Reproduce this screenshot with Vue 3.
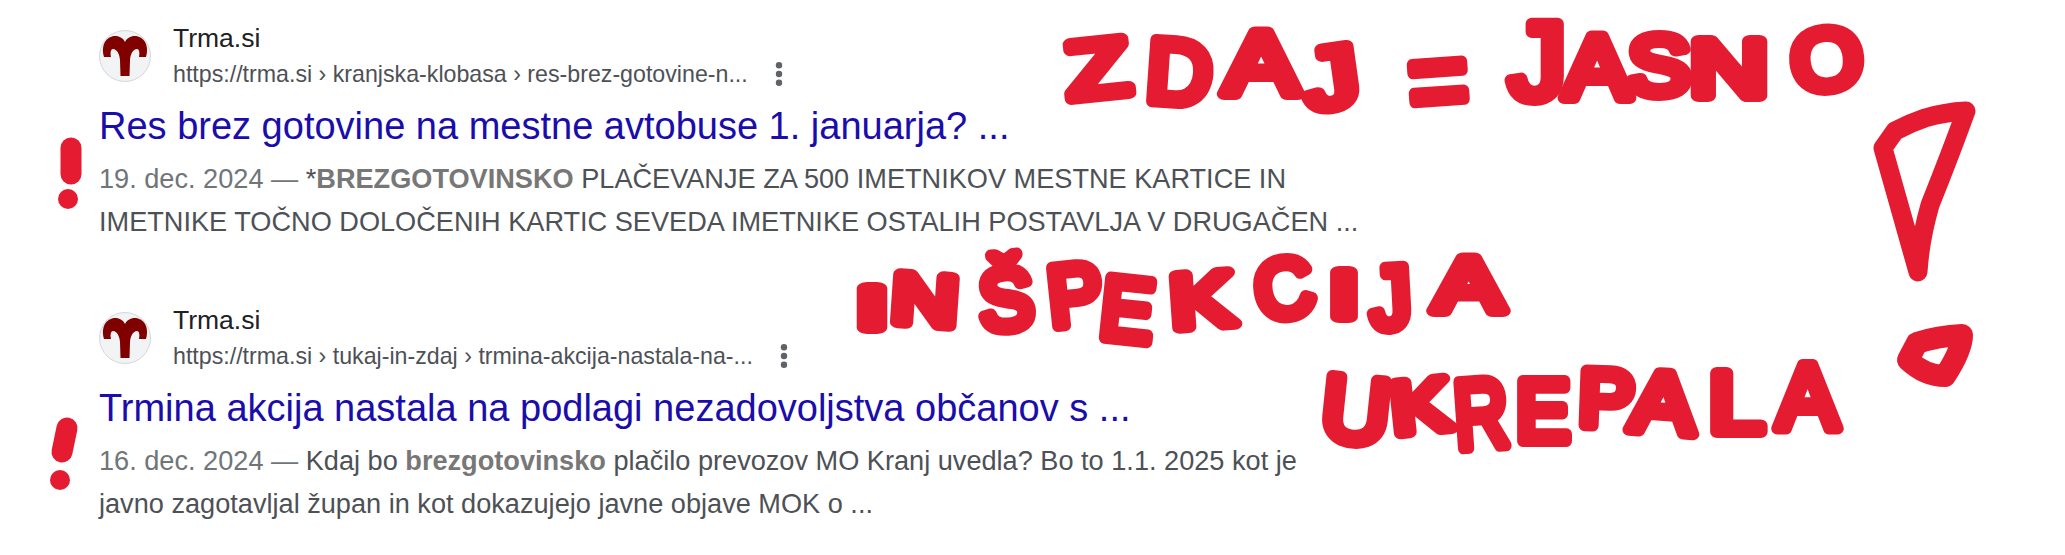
<script setup>
const results = [
  {
    url: 'https://trma.si › kranjska-klobasa › res-brez-gotovine-n...',
    title: 'Res brez gotovine na mestne avtobuse 1. januarja? ...',
    date: '19. dec. 2024',
    prefix: '*',
    bold: 'BREZGOTOVINSKO',
    rest: ' PLAČEVANJE ZA 500 IMETNIKOV MESTNE KARTICE IN',
    line2: 'IMETNIKE TOČNO DOLOČENIH KARTIC SEVEDA IMETNIKE OSTALIH POSTAVLJA V DRUGAČEN ...'
  },
  {
    url: 'https://trma.si › tukaj-in-zdaj › trmina-akcija-nastala-na-...',
    title: 'Trmina akcija nastala na podlagi nezadovoljstva občanov s ...',
    date: '16. dec. 2024',
    prefix: 'Kdaj bo ',
    bold: 'brezgotovinsko',
    rest: ' plačilo prevozov MO Kranj uvedla? Bo to 1.1. 2025 kot je',
    line2: 'javno zagotavljal župan in kot dokazujejo javne objave MOK o ...'
  }
]

// marker letters: c, x0, x1, y0, y1 (box of the letter on the canvas), r (tilt)
const SW = 12
const CAP = 0.716
const raw = [
  ['Z', 1060, 1135, 33, 102, -6], ['D', 1141, 1218, 33, 109, 4], ['A', 1218, 1304, 24, 100, 0], ['J', 1298, 1364, 40, 113, -8],
  ['J', 1503, 1572, 15, 105, 0], ['A', 1558, 1636, 28, 104, 0], ['S', 1622, 1696, 28, 100, 0], ['N', 1684, 1774, 33, 102, 0], ['O', 1785, 1868, 22, 95, -6],
  ['I', 852, 892, 281, 334, 0], ['N', 886, 964, 268, 330, 4], ['Š', 973, 1039, 262, 335, -4], ['P', 1042, 1108, 257, 330, -6], ['E', 1095, 1160, 271, 346, 6],
  ['K', 1164, 1240, 266, 332, -4], ['C', 1249, 1319, 252, 323, -10], ['I', 1324, 1364, 264, 323, 0], ['J', 1364, 1417, 259, 334, -3], ['A', 1428, 1509, 250, 317, 0],
  ['U', 1316, 1396, 370, 448, 6], ['K', 1385, 1456, 373, 437, -6], ['R', 1448, 1514, 372, 453, -4], ['E', 1510, 1576, 372, 447, 0],
  ['P', 1573, 1640, 363, 432, 2], ['A', 1625, 1701, 365, 438, 4], ['L', 1703, 1770, 365, 438, 0], ['A', 1771, 1844, 357, 435, 0]
]
const letters = raw.map(([c, x0, x1, y0, y1, r]) => {
  const size = (y1 - y0 - SW) / CAP
  return {
    c, size,
    x: x0 + SW / 2,
    y: y1 - SW / 2,
    w: x1 - x0 - SW,
    rot: `rotate(${r} ${(x0 + x1) / 2} ${(y0 + y1) / 2})`
  }
})
</script>

<template>
  <div class="page">
    <article v-for="r in results" :key="r.url" class="result">
      <header class="head">
        <svg class="favicon" viewBox="0 0 52 52">
          <circle cx="26" cy="26" r="25.5" fill="#f1f3f4" stroke="#d5d7da" />
          <path fill="#800000" d="M21.5 46 H30.5 L31 30 C31.5 24 34 19 38 19 C40 19 41 22 40 27 L47 27 C49.5 19 48 9 39 6.5 C33 5 28 8 26 12 C24 8 19 5 13 6.5 C4 9 2.5 19 5 27 L12 27 C11 22 12 19 14 19 C18 19 20.5 24 21 30 Z" />
        </svg>
        <div class="source">
          <div class="name">Trma.si</div>
          <div class="url-row">
            <span class="url">{{ r.url }}</span>
            <svg class="dots" viewBox="0 0 8 24" width="8" height="24">
              <circle cx="4" cy="3.2" r="3.2" />
              <circle cx="4" cy="12" r="3.2" />
              <circle cx="4" cy="20.8" r="3.2" />
            </svg>
          </div>
        </div>
      </header>
      <h3 class="title">{{ r.title }}</h3>
      <p class="snippet"><span class="date">{{ r.date }} — </span>{{ r.prefix }}<b>{{ r.bold }}</b>{{ r.rest }}<br />{{ r.line2 }}</p>
    </article>

    <svg class="marker" viewBox="0 0 2065 555" width="2065" height="555">
      <text
        v-for="(l, i) in letters"
        :key="i"
        :x="l.x"
        :y="l.y"
        :font-size="l.size"
        :textLength="l.w"
        lengthAdjust="spacingAndGlyphs"
        :transform="l.rot"
      >{{ l.c }}</text>
      <text x="1408" y="120" font-size="116" textLength="60" lengthAdjust="spacingAndGlyphs" transform="rotate(-4 1438 78)">=</text>

      <!-- big exclamation, drawn as an outline -->
      <g class="pen">
        <path d="M1883 148 L1895 131 Q1910 123 1925 118 Q1945 112 1966 111 Q1950 155 1930 205 Q1920 240 1918 272 Z" />
        <path class="blob" d="M1908 360 L1917 343 Q1938 336 1962 335 Q1962 350 1945 376 Q1925 376 1908 360 Z" />
      </g>
      <!-- small exclamations next to the results -->
      <g class="pen bar">
        <path d="M71 148 L71 174" />
        <path d="M67 428 L62 452" />
      </g>
      <circle class="spot" cx="68" cy="199" r="10" />
      <circle class="spot" cx="60" cy="480" r="10" />
    </svg>
  </div>
</template>

<style scoped>
.page {
  position: relative;
  width: 2065px;
  height: 555px;
  overflow: hidden;
  background: #fff;
  font-family: "Liberation Sans", Arial, sans-serif;
  padding: 20px 0 0 99px;
  box-sizing: border-box;
}
.result {
  margin-bottom: 59px;
}
.head {
  display: flex;
  align-items: center;
  gap: 22px;
}
.favicon {
  width: 52px;
  height: 52px;
  flex: none;
}
.name {
  font-size: 26.5px;
  line-height: 36px;
  color: #202124;
}
.url-row {
  display: flex;
  align-items: center;
  gap: 27px;
  height: 36px;
}
.url {
  font-size: 23.2px;
  color: #4d5156;
}
.dots {
  fill: #5f6368;
}
.title {
  margin: 12px 0 0;
  font-size: 38px;
  line-height: 44px;
  font-weight: 400;
  color: #1a0dab;
  white-space: nowrap;
}
.snippet {
  margin: 9px 0 0;
  font-size: 27.15px;
  line-height: 43px;
  color: #4d5156;
  white-space: nowrap;
}
.date {
  color: #70757a;
}
.snippet b {
  color: #777;
}
.marker {
  position: absolute;
  left: 0;
  top: 0;
}
.marker text {
  font-family: "Liberation Sans", Arial, sans-serif;
  fill: #e51b31;
  stroke: #e51b31;
  stroke-width: 12;
  stroke-linejoin: round;
  stroke-linecap: round;
}
.pen {
  fill: none;
  stroke: #e51b31;
  stroke-width: 19;
  stroke-linejoin: round;
  stroke-linecap: round;
}
.blob {
  stroke-width: 22;
}
.bar {
  stroke-width: 21;
}
.spot {
  fill: #e51b31;
}
</style>
